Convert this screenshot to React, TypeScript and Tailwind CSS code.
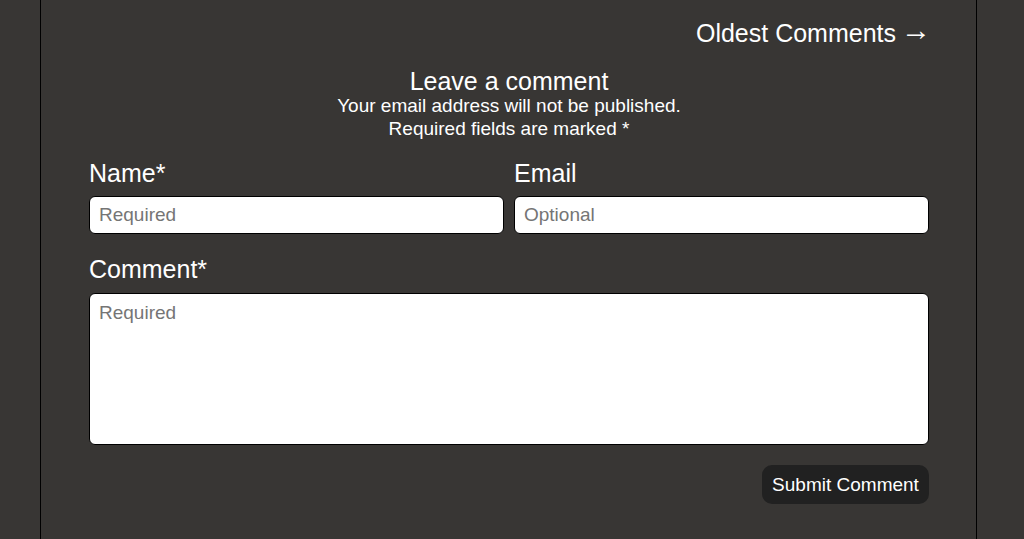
export default function App() {
  return (
    <div className="h-[539px] w-[1024px] overflow-hidden bg-[#383634] text-white" style={{ fontFamily: '"Liberation Sans", Arial, sans-serif' }}>
      <div className="ml-[40px] h-full w-[937px] border-x border-black pl-[48px] pr-[47px]">
        <div className="flex h-[48px] items-baseline justify-end pt-[19px] text-[25px] leading-[29px]">
          <span>Oldest Comments</span>
          <span className="relative -top-[2px] -mr-[2px] ml-[5px] text-[30px] leading-[25px]">→</span>
        </div>
        <div className="mt-[22px] text-center">
          <h2 className="text-[25px] leading-[22px]">Leave a comment</h2>
          <p className="mt-[2px] text-[19px] leading-[23px]">Your email address will not be published.<br />Required fields are marked *</p>
        </div>
        <form className="mt-[19px]">
          <div className="grid grid-cols-2 gap-[10px]">
            <div className="flex flex-col">
              <label className="text-[25px] leading-[29px]">Name*</label>
              <input placeholder="Required" className="mt-[8px] h-[38px] rounded-[6px] border border-black bg-white px-[9px] text-[19px] text-black outline-none placeholder:text-[#757575]" />
            </div>
            <div className="flex flex-col">
              <label className="text-[25px] leading-[29px]">Email</label>
              <input placeholder="Optional" className="mt-[8px] h-[38px] rounded-[6px] border border-black bg-white px-[9px] text-[19px] text-black outline-none placeholder:text-[#757575]" />
            </div>
          </div>
          <div className="mt-[21px] flex flex-col">
            <label className="text-[25px] leading-[29px]">Comment*</label>
            <textarea placeholder="Required" className="mt-[9px] block h-[152px] resize-none rounded-[6px] border border-black bg-white px-[9px] py-[7px] text-[19px] leading-[23px] text-black outline-none placeholder:text-[#757575]" />
          </div>
          <div className="mt-[20px] flex justify-end">
            <button type="button" className="h-[39px] w-[167px] rounded-[10px] bg-[#212121] pt-[1px] text-[19px] text-white">Submit Comment</button>
          </div>
        </form>
      </div>
    </div>
  );
}
